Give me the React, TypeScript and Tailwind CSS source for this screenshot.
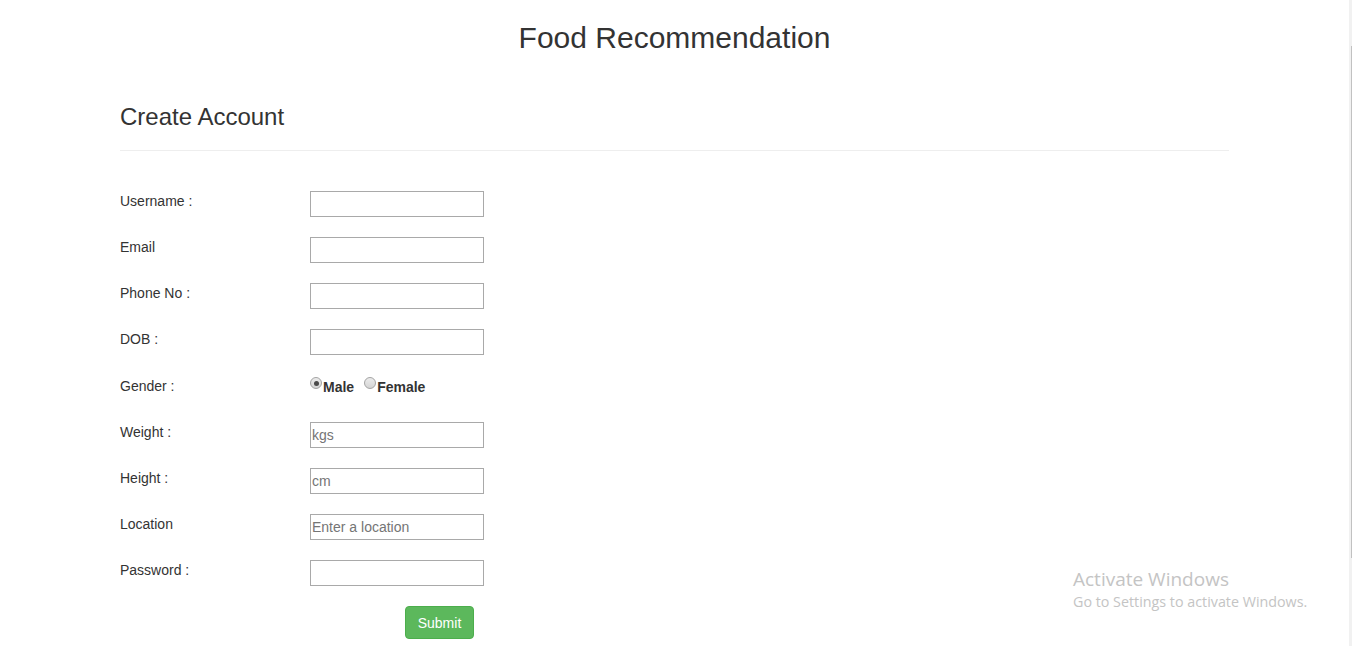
import React from "react";

function Radio({ checked }: { checked?: boolean }) {
  return (
    <span className="flex h-[12px] w-[12px] shrink-0 items-center justify-center rounded-full border border-[#a3a3a3] bg-gradient-to-b from-[#ececec] to-[#d4d4d4]">
      {checked ? <span className="h-[5px] w-[5px] rounded-full bg-[#4a4a4a]" /> : null}
    </span>
  );
}

function Field({ label, placeholder }: { label: string; placeholder?: string }) {
  return (
    <div className="flex h-[27px] items-start">
      <div className="mt-[1px] w-[190px] text-[14px] leading-[20px] text-[#333]">{label}</div>
      <input
        type="text"
        placeholder={placeholder}
        className="mt-[1px] box-border h-[26px] w-[174px] border border-[#a9a9a9] bg-white px-[1px] text-[14px] text-[#333] outline-none placeholder:text-[#757575]"
        style={{ fontFamily: '"Liberation Sans", Arial, sans-serif' }}
      />
    </div>
  );
}

export default function App() {
  return (
    <div
      className="relative flex h-[646px] w-full overflow-hidden bg-white"
      style={{ fontFamily: '"Liberation Sans", Arial, Helvetica, sans-serif' }}
    >
      <div className="flex-1">
        <h2 className="mt-[21px] text-center text-[30px] leading-[33px] font-normal text-[#333]">
          Food Recommendation
        </h2>
        <div className="mx-[120px]">
          <h3 className="mt-[50px] text-[24px] leading-[26px] font-normal text-[#333]">Create Account</h3>
          <div className="mt-[20px] border-t border-[#eeeeee]" />
          <div className="mt-[39px] flex flex-col gap-[19px]">
            <Field label="Username :" />
            <Field label="Email" />
            <Field label="Phone No :" />
            <Field label="DOB :" />
            <div className="flex h-[28px] items-start">
              <div className="mt-[2px] w-[190px] text-[14px] leading-[20px] text-[#333]">Gender :</div>
              <div className="flex items-start">
                <span className="mt-[3px]">
                  <Radio checked />
                </span>
                <span className="mt-[3px] ml-[1px] text-[14px] leading-[20px] font-bold text-[#333]">Male</span>
                <span className="ml-[10px] mt-[3px]">
                  <Radio />
                </span>
                <span className="mt-[3px] ml-[1px] text-[14px] leading-[20px] font-bold text-[#333]">Female</span>
              </div>
            </div>
            <Field label="Weight :" placeholder="kgs" />
            <Field label="Height :" placeholder="cm" />
            <Field label="Location" placeholder="Enter a location" />
            <Field label="Password :" />
            <div className="flex">
              <button className="ml-[285px] mt-[1px] box-border h-[33px] w-[69px] rounded-[4px] border border-[#4cae4c] bg-[#5cb85c] text-[14px] leading-[20px] text-white">
                Submit
              </button>
            </div>
          </div>
        </div>
      </div>
      <div className="flex w-[3px] shrink-0 justify-end bg-[#f1f1f1] pt-[46px] pb-[88px]">
        <div className="w-[1px] bg-[#c1c1c1]" />
      </div>
      <div
        className="pointer-events-none absolute top-[568px] left-[1073px] text-[#c4c4c4]"
        style={{ fontFamily: '"Open Sans", "Noto Sans", sans-serif' }}
      >
        <div className="text-[19px] leading-[22px]">Activate Windows</div>
        <div className="mt-[2px] text-[14.3px] leading-[20px]">Go to Settings to activate Windows.</div>
      </div>
    </div>
  );
}
